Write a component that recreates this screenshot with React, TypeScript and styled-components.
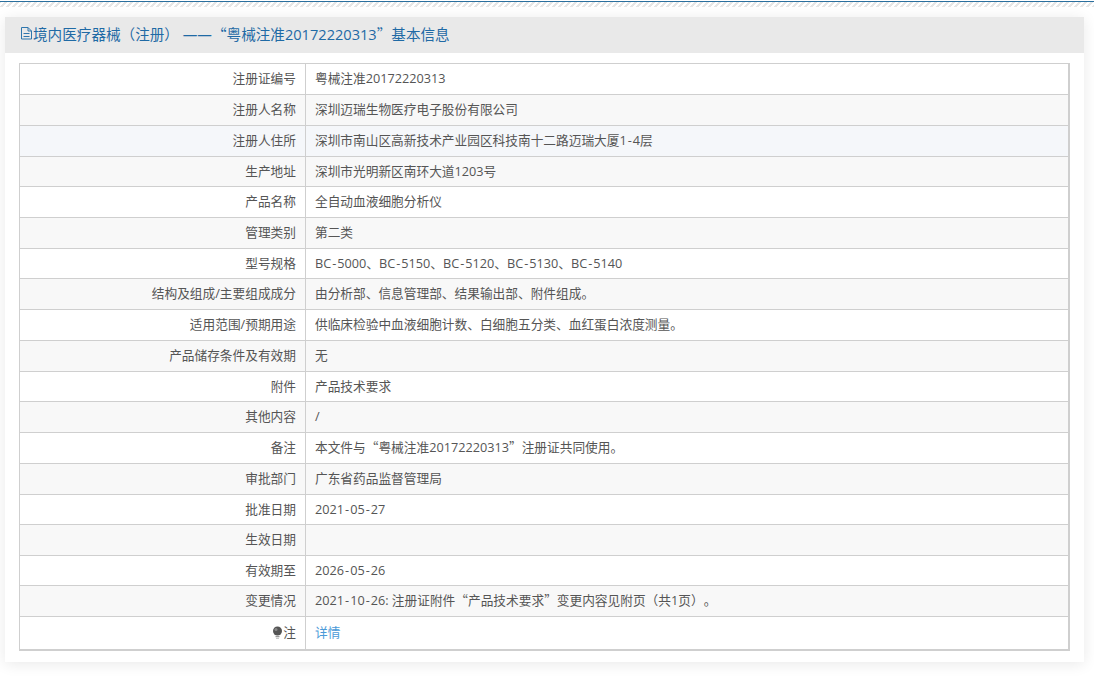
import React from "react";
import styled, { createGlobalStyle } from "styled-components";

// row heights follow the reference's border lines, it doesn't round evenly
const rows: [string, string, number][] = [
  ["注册证编号", "粤械注准20172220313", 31],
  ["注册人名称", "深圳迈瑞生物医疗电子股份有限公司", 31],
  ["注册人住所", "深圳市南山区高新技术产业园区科技南十二路迈瑞大厦1-4层", 31],
  ["生产地址", "深圳市光明新区南环大道1203号", 30],
  ["产品名称", "全自动血液细胞分析仪", 31],
  ["管理类别", "第二类", 31],
  ["型号规格", "BC-5000、BC-5150、BC-5120、BC-5130、BC-5140", 30],
  ["结构及组成/主要组成成分", "由分析部、信息管理部、结果输出部、附件组成。", 31],
  ["适用范围/预期用途", "供临床检验中血液细胞计数、白细胞五分类、血红蛋白浓度测量。", 31],
  ["产品储存条件及有效期", "无", 31],
  ["附件", "产品技术要求", 30],
  ["其他内容", "/", 31],
  ["备注", "本文件与“粤械注准20172220313”注册证共同使用。", 31],
  ["审批部门", "广东省药品监督管理局", 31],
  ["批准日期", "2021-05-27", 30],
  ["生效日期", "", 31],
  ["有效期至", "2026-05-26", 30],
  ["变更情况", "2021-10-26: 注册证附件“产品技术要求”变更内容见附页（共1页）。", 31],
];

const GlobalStyle = createGlobalStyle`
  html, body {
    margin: 0;
    padding: 0;
    background: #fff;
    font-family: "Open Sans", "Noto Sans CJK SC", sans-serif;
    font-size: 12.7px;
    color: #555;
    text-spacing-trim: space-all;
  }
`;

const TopBar = styled.div`
  height: 7px;
  border-top: 1px solid #fff;
  box-sizing: border-box;
  background: repeating-linear-gradient(
    135deg,
    #e6e6e6 0,
    #e6e6e6 2px,
    #fff 2px,
    #fff 4.24px
  );

  &::before {
    content: "";
    display: block;
    height: 1px;
    background: #2a6f9e;
  }
`;

const Page = styled.div`
  padding: 10px 10px 20px 5px;
`;

const Panel = styled.section`
  background: #fff;
  box-shadow: 0 2px 14px rgba(0, 0, 0, 0.09);
  padding-bottom: 11px;
`;

const PanelHeader = styled.h3`
  display: flex;
  align-items: center;
  box-sizing: border-box;
  height: 36px;
  margin: 0 0 10px;
  padding: 0 0 4px 15px;
  background: #e9e9e9;
  color: #1f6aa5;
  font-size: 14.6px;
  font-weight: 400;
  white-space: pre;
`;

const HeaderIcon = styled.svg`
  width: 13px;
  height: 14px;
  flex: none;
`;

const Table = styled.table`
  width: 1051px;
  margin-left: 14px;
  border-collapse: collapse;
  table-layout: fixed;
  border: 2px solid #cfcfcf;
  border-width: 1px 2px 2px 1px;
`;

const Row = styled.tr<{ $h: number; $hover?: boolean }>`
  height: ${(p) => p.$h}px;
  background: ${(p) => (p.$hover ? "#f5f7fa" : "#fff")};

  &:nth-child(even) {
    background: ${(p) => (p.$hover ? "#f5f7fa" : "#f8f8f8")};
  }
`;

const Label = styled.td`
  width: 286px;
  box-sizing: border-box;
  padding: 0 9px 2px;
  border: 1px solid #cfcfcf;
  line-height: 20px;
  text-align: right;
  color: #555;
`;

const Value = styled.td`
  padding: 0 9px 2px;
  border: 1px solid #cfcfcf;
  line-height: 20px;
  color: #555;
`;

// quotes stay full width, Open Sans would draw them narrow
const Quote = styled.span`
  font-family: "Noto Sans CJK SC", sans-serif;
`;

const Hyphen = styled.span`
  margin: 0 1px;
`;

const DetailLink = styled.a`
  color: #4a9ad8;
  text-decoration: none;
`;

const Bulb = styled.svg`
  width: 11px;
  height: 13px;
  vertical-align: -2px;
`;

const fixGlyphs = (text: string) =>
  text.split(/([“”-])/).map((part, i) => {
    if (part === "“" || part === "”") return <Quote key={i}>{part}</Quote>;
    if (part === "-") return <Hyphen key={i}>{part}</Hyphen>;
    return part;
  });

export default function App() {
  return (
    <>
      <GlobalStyle />
      <TopBar />
      <Page>
        <Panel>
          <PanelHeader>
            <HeaderIcon viewBox="0 0 13 14" fill="none" stroke="#2f76ad" strokeWidth="1">
              <path d="M1.5 1.5h6.5l3.5 3.5v8h-10z" />
              <path d="M8 1.5v3.5h3.5M3.5 7.5h6M3.5 10.5h6" />
            </HeaderIcon>
            {fixGlyphs("境内医疗器械（注册） ——“粤械注准20172220313”基本信息")}
          </PanelHeader>
          <Table>
            <tbody>
              {rows.map(([k, v, h], i) => (
                <Row key={k} $h={h} $hover={i === 2}>
                  <Label>{k}</Label>
                  <Value>{fixGlyphs(v)}</Value>
                </Row>
              ))}
              <Row $h={33}>
                <Label>
                  <Bulb viewBox="0 0 11 13">
                    <circle cx="5.5" cy="5" r="4.5" fill="#555" />
                    <circle cx="4" cy="3.5" r="1.5" fill="#888" />
                    <rect x="3.5" y="10" width="4" height="1.2" fill="#999" />
                    <rect x="4" y="11.8" width="3" height="1" fill="#bbb" />
                  </Bulb>
                  注
                </Label>
                <Value>
                  <DetailLink href="#">详情</DetailLink>
                </Value>
              </Row>
            </tbody>
          </Table>
        </Panel>
      </Page>
    </>
  );
}
